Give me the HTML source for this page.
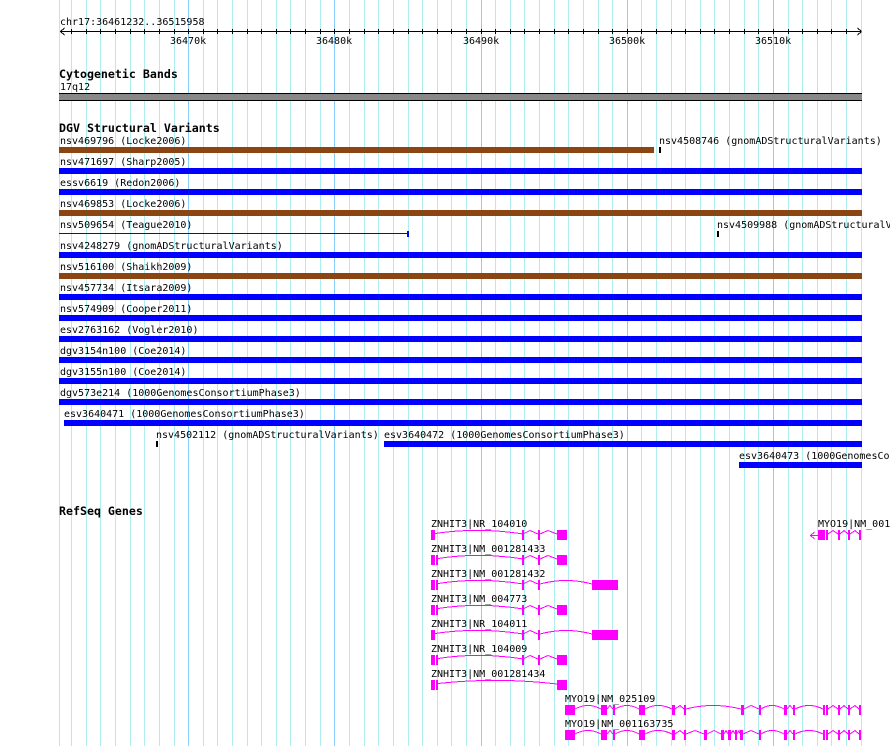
<!DOCTYPE html>
<html><head><meta charset="utf-8"><title>Genome browser</title>
<style>
html,body{margin:0;padding:0;background:#fff;width:890px;height:746px;overflow:hidden}
svg{display:block}
text{font-family:"DejaVu Sans Mono","Liberation Mono",monospace;font-size:10px;fill:#000;white-space:pre}
text.b{font-weight:bold;font-size:11.62px}
</style></head><body>
<svg width="890" height="746" viewBox="0 0 890 746" xmlns="http://www.w3.org/2000/svg" shape-rendering="crispEdges">
<defs>
<g id="r1"><path fill="none" stroke="#f0f" d="M435 3.5Q478 -3 523 4M524 3.5L530 .5L538 4M540 4L548 .5L557 4"/><path fill="#f0f" d="M431 0h4v10h-4zM522 0h2v10h-2zM538 0h2v10h-2zM557 0h10v10h-10z"/></g>
<g id="r2"><path fill="none" stroke="#f0f" d="M438 3.5Q480 -3 523 4M524 3.5L530 .5L538 4M540 4L548 .5L557 4"/><path fill="#f0f" d="M431 0h4v10h-4zM436 0h2v10h-2zM522 0h2v10h-2zM538 0h2v10h-2zM557 0h10v10h-10z"/></g>
<g id="r3"><path fill="none" stroke="#f0f" d="M438 3.5Q480 -3 523 4M524 3.5L530 .5L538 4M540 4Q566 -3 592 4"/><path fill="#f0f" d="M431 0h4v10h-4zM436 0h2v10h-2zM522 0h2v10h-2zM538 0h2v10h-2zM592 0h26v10h-26z"/></g>
<g id="r5"><path fill="none" stroke="#f0f" d="M435 3.5Q478 -3 523 4M524 3.5L530 .5L538 4M540 4Q566 -3 592 4"/><path fill="#f0f" d="M431 0h4v10h-4zM522 0h2v10h-2zM538 0h2v10h-2zM592 0h26v10h-26z"/></g>
<g id="r7"><path fill="none" stroke="#f0f" d="M438 3.5Q497 -3 557 4"/><path fill="#f0f" d="M431 0h4v10h-4zM436 0h2v10h-2zM557 0h10v10h-10z"/></g>
</defs>
<path fill="none" stroke="#afeeee" d="M59.5 0V746M71.5 0V746M86.5 0V746M100.5 0V746M115.5 0V746M130.5 0V746M144.5 0V746M159.5 0V746M174.5 0V746M203.5 0V746M217.5 0V746M232.5 0V746M247.5 0V746M261.5 0V746M276.5 0V746M290.5 0V746M305.5 0V746M320.5 0V746M349.5 0V746M364.5 0V746M378.5 0V746M393.5 0V746M408.5 0V746M422.5 0V746M437.5 0V746M451.5 0V746M466.5 0V746M495.5 0V746M510.5 0V746M524.5 0V746M539.5 0V746M554.5 0V746M568.5 0V746M583.5 0V746M598.5 0V746M612.5 0V746M641.5 0V746M656.5 0V746M671.5 0V746M685.5 0V746M700.5 0V746M714.5 0V746M729.5 0V746M744.5 0V746M758.5 0V746M788.5 0V746M802.5 0V746M817.5 0V746M831.5 0V746M846.5 0V746M861.5 0V746"/>
<path fill="none" stroke="#87cefa" d="M188.5 0V746M334.5 0V746M481.5 0V746M627.5 0V746M773.5 0V746"/>

<path fill="none" stroke="#000" d="M60 31.5H861M60.5 31.5L64.5 28M60.5 31.5L64.5 35M861.5 31.5L857.5 28M861.5 31.5L857.5 35M71.5 29V34M86.5 29V34M100.5 29V34M115.5 29V34M130.5 29V34M144.5 29V34M159.5 29V34M174.5 29V34M188.5 29V34M203.5 29V34M217.5 29V34M232.5 29V34M247.5 29V34M261.5 29V34M276.5 29V34M290.5 29V34M305.5 29V34M320.5 29V34M334.5 29V34M349.5 29V34M364.5 29V34M378.5 29V34M393.5 29V34M408.5 29V34M422.5 29V34M437.5 29V34M451.5 29V34M466.5 29V34M481.5 29V34M495.5 29V34M510.5 29V34M524.5 29V34M539.5 29V34M554.5 29V34M568.5 29V34M583.5 29V34M598.5 29V34M612.5 29V34M627.5 29V34M641.5 29V34M656.5 29V34M671.5 29V34M685.5 29V34M700.5 29V34M714.5 29V34M729.5 29V34M744.5 29V34M758.5 29V34M773.5 29V34M788.5 29V34M802.5 29V34M817.5 29V34M831.5 29V34M846.5 29V34"/>
<text x="60" y="25">chr17:36461232..36515958</text>
<text x="170" y="44">36470k</text>
<text x="316" y="44">36480k</text>
<text x="463" y="44">36490k</text>
<text x="609" y="44">36500k</text>
<text x="755" y="44">36510k</text>

<text class="b" x="59" y="78">Cytogenetic Bands</text>
<text x="60" y="90">17q12</text>
<rect x="59" y="93" width="803" height="8" fill="#000"/>
<rect x="59" y="94" width="803" height="6" fill="#888"/>

<text class="b" x="59" y="132">DGV Structural Variants</text>
<text x="60" y="144">nsv469796 (Locke2006)</text>
<text x="659" y="144">nsv4508746 (gnomADStructuralVariants)</text>
<text x="60" y="165">nsv471697 (Sharp2005)</text>
<text x="60" y="186">essv6619 (Redon2006)</text>
<text x="60" y="207">nsv469853 (Locke2006)</text>
<text x="60" y="228">nsv509654 (Teague2010)</text>
<text x="717" y="228">nsv4509988 (gnomADStructuralVariants)</text>
<text x="60" y="249">nsv4248279 (gnomADStructuralVariants)</text>
<text x="60" y="270">nsv516100 (Shaikh2009)</text>
<text x="60" y="291">nsv457734 (Itsara2009)</text>
<text x="60" y="312">nsv574909 (Cooper2011)</text>
<text x="60" y="333">esv2763162 (Vogler2010)</text>
<text x="60" y="354">dgv3154n100 (Coe2014)</text>
<text x="60" y="375">dgv3155n100 (Coe2014)</text>
<text x="60" y="396">dgv573e214 (1000GenomesConsortiumPhase3)</text>
<text x="64" y="417">esv3640471 (1000GenomesConsortiumPhase3)</text>
<text x="156" y="438">nsv4502112 (gnomADStructuralVariants)</text>
<text x="384" y="438">esv3640472 (1000GenomesConsortiumPhase3)</text>
<text x="739" y="459">esv3640473 (1000GenomesConsortiumPhase3)</text>

<path fill="#8b4513" d="M59 147H654V153H59zM59 210H862V216H59zM59 273H862V279H59z"/>
<path fill="#000" d="M659 147h2v6h-2zM717 231h2v6h-2zM156 441h2v6h-2z"/>
<path fill="#00f" d="M59 168H862V174H59zM59 189H862V195H59zM59 233H408V234H59zM407 231h2v6h-2zM59 252H862V258H59zM59 294H862V300H59zM59 315H862V321H59zM59 336H862V342H59zM59 357H862V363H59zM59 378H862V384H59zM59 399H862V405H59zM64 420H862V426H64zM384 441H862V447H384zM739 462H862V468H739z"/>

<text class="b" x="59" y="515">RefSeq Genes</text>
<text x="431" y="527">ZNHIT3|NR_104010</text>
<text x="818" y="527">MYO19|NM_001163735</text>
<text x="431" y="552">ZNHIT3|NM_001281433</text>
<text x="431" y="577">ZNHIT3|NM_001281432</text>
<text x="431" y="602">ZNHIT3|NM_004773</text>
<text x="431" y="627">ZNHIT3|NR_104011</text>
<text x="431" y="652">ZNHIT3|NR_104009</text>
<text x="431" y="677">ZNHIT3|NM_001281434</text>
<text x="565" y="702">MYO19|NM_025109</text>
<text x="565" y="727">MYO19|NM_001163735</text>

<use href="#r1" y="530"/>
<use href="#r2" y="555"/>
<use href="#r3" y="580"/>
<use href="#r2" y="605"/>
<use href="#r5" y="630"/>
<use href="#r2" y="655"/>
<use href="#r7" y="680"/>

<path fill="none" stroke="#f0f" d="M810 535.5H818M810.5 535.5L814.5 532M810.5 535.5L814.5 539M828 534L833 530.5L838 534M840 534L844 530.5L848 534M850 534L855 530.5L859 534"/>
<path fill="#f0f" d="M818 530h7v10h-7zM826 530h2v10h-2zM838 530h2v10h-2zM848 530h2v10h-2zM859 530h2v10h-2z"/>

<g transform="translate(0,705)">
<path fill="none" stroke="#f0f" d="M575 4Q588 -3 601 4M607 4L610 .5L613 4M615 4Q627 -3 639 4M645 4Q658 -3 672 4M675 4L680 .5L684 4M686 4Q713 -3 741 4M744 4L751 .5L759 4M761 4Q772 -3 784 4M787 4L790 .5L793 4M795 4Q809 -3 823 4M828 4L833 .5L838 4M840 4L844 .5L848 4M850 4L855 .5L859 4"/>
<path fill="#f0f" d="M565 0h10v10h-10zM601 0h6v10h-6zM613 0h2v10h-2zM639 0h6v10h-6zM672 0h3v10h-3zM684 0h2v10h-2zM741 0h3v10h-3zM759 0h2v10h-2zM784 0h3v10h-3zM793 0h2v10h-2zM823 0h2v10h-2zM826 0h2v10h-2zM838 0h2v10h-2zM848 0h2v10h-2zM859 0h2v10h-2z"/>
</g>
<g transform="translate(0,730)">
<path fill="none" stroke="#f0f" d="M575 4Q588 -3 601 4M607 4L610 .5L613 4M615 4Q627 -3 639 4M645 4Q658 -3 672 4M675 4L680 .5L684 4M686 4L695 .5L704 4M707 4L714 .5L721 4M724 4L726 .5L728 4M731 4L733 .5L735 4M737 4L739 .5L740 4M743 4L751 .5L759 4M761 4Q772 -3 784 4M787 4L790 .5L793 4M795 4Q809 -3 823 4M828 4L833 .5L838 4M840 4L844 .5L848 4M850 4L855 .5L859 4"/>
<path fill="#f0f" d="M565 0h10v10h-10zM601 0h6v10h-6zM613 0h2v10h-2zM639 0h6v10h-6zM672 0h3v10h-3zM684 0h2v10h-2zM704 0h3v10h-3zM721 0h3v10h-3zM728 0h3v10h-3zM735 0h2v10h-2zM740 0h3v10h-3zM759 0h2v10h-2zM784 0h3v10h-3zM793 0h2v10h-2zM823 0h2v10h-2zM826 0h2v10h-2zM838 0h2v10h-2zM848 0h2v10h-2zM859 0h2v10h-2z"/>
</g>
</svg>
</body></html>
